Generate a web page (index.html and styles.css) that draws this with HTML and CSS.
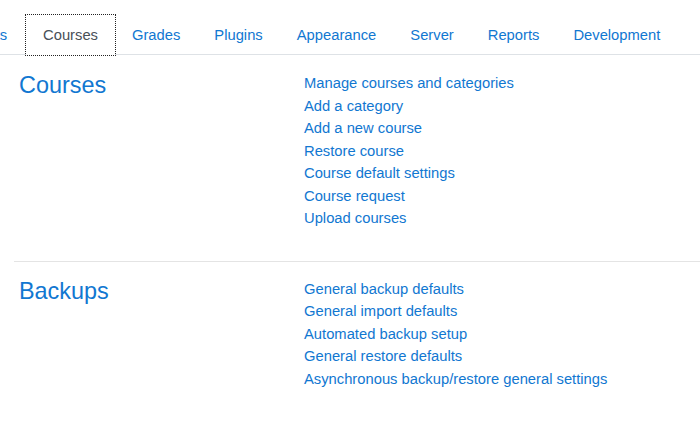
FILE: index.html
```html
<!DOCTYPE html>
<html>
<head>
<meta charset="utf-8">
<link rel="stylesheet" href="styles.css">
</head>
<body>
<div class="page">
  <ul class="tabs">
    <li class="tab tab-cut"><a href="#">Users</a></li>
    <li class="tab active"><a href="#">Courses</a></li>
    <li class="tab"><a href="#">Grades</a></li>
    <li class="tab"><a href="#">Plugins</a></li>
    <li class="tab"><a href="#">Appearance</a></li>
    <li class="tab"><a href="#">Server</a></li>
    <li class="tab"><a href="#">Reports</a></li>
    <li class="tab"><a href="#">Development</a></li>
  </ul>
  <div class="content">
    <section class="cat">
      <h3 class="cat-title"><a href="#">Courses</a></h3>
      <ul class="links">
        <li><a href="#">Manage courses and categories</a></li>
        <li><a href="#">Add a category</a></li>
        <li><a href="#">Add a new course</a></li>
        <li><a href="#">Restore course</a></li>
        <li><a href="#">Course default settings</a></li>
        <li><a href="#">Course request</a></li>
        <li><a href="#">Upload courses</a></li>
      </ul>
    </section>
    <hr class="divider">
    <section class="cat">
      <h3 class="cat-title"><a href="#">Backups</a></h3>
      <ul class="links">
        <li><a href="#">General backup defaults</a></li>
        <li><a href="#">General import defaults</a></li>
        <li><a href="#">Automated backup setup</a></li>
        <li><a href="#">General restore defaults</a></li>
        <li><a href="#">Asynchronous backup/restore general settings</a></li>
      </ul>
    </section>
  </div>
</div>
</body>
</html>
```

FILE: styles.css
```css
* { box-sizing: border-box; }
html, body { margin: 0; padding: 0; background: #fff; }
body {
  font-family: "Liberation Sans", Arial, sans-serif;
  font-size: 14.75px;
  line-height: 22.5px;
  color: #1d2125;
  width: 700px;
  height: 425px;
  overflow: hidden;
}
a { color: #1177d1; text-decoration: none; }
.page { padding-top: 15px; }
.tabs {
  list-style: none;
  margin: 0;
  padding: 0;
  display: flex;
  border-bottom: 1px solid #dee2e6;
  white-space: nowrap;
}
.tab { margin-bottom: -1px; flex: none; }
.tab a {
  display: block;
  padding: 8px 16px;
  border: 1px solid transparent;
  line-height: 22px;
}
.tab-cut { margin-left: -48.5px; }
.tab-cut a { padding-right: 18px; }
.tab.active a {
  color: #495057;
  background: #fff;
  border-color: #fff;
  outline: 1px dotted #222;
}
.content { padding: 16px 0 0 14px; }
.cat { display: flex; align-items: flex-start; }
.cat-title {
  width: 290px;
  flex: none;
  margin: 0;
  padding-left: 5px;
  font-size: 23.4px;
  font-weight: normal;
  line-height: 28px;
}
.links { list-style: none; margin: 0; padding: 1px 0 0 0; }
.links li { line-height: 22.5px; }
.divider {
  border: 0;
  border-top: 1px solid #e4e4e4;
  margin: 31px 0 15px 0;
}
```
